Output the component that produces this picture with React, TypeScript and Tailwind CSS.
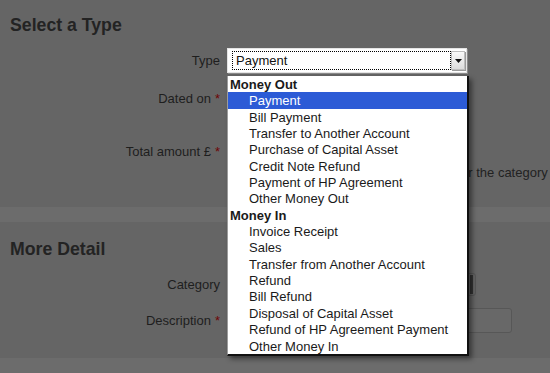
import React from 'react';

const groups = [
  {
    label: 'Money Out',
    items: [
      'Payment',
      'Bill Payment',
      'Transfer to Another Account',
      'Purchase of Capital Asset',
      'Credit Note Refund',
      'Payment of HP Agreement',
      'Other Money Out',
    ],
  },
  {
    label: 'Money In',
    items: [
      'Invoice Receipt',
      'Sales',
      'Transfer from Another Account',
      'Refund',
      'Bill Refund',
      'Disposal of Capital Asset',
      'Refund of HP Agreement Payment',
      'Other Money In',
    ],
  },
];

function Req() {
  return <span className="ml-[4px] text-[#6e0606]">*</span>;
}

function Label({ children, required }: { children: React.ReactNode; required?: boolean }) {
  return (
    <div className="w-[220px] shrink-0 text-right text-[13px] text-[#1e1e1e]">
      {children}
      {required && <Req />}
    </div>
  );
}

function TypeSelect() {
  return (
    <div className="relative">
      <div className="flex h-[25px] w-[240px] items-center border border-[#e4e4e4] bg-white pl-[4px] pr-[1px] shadow-[1px_1px_0_#8a8a8a]">
        <div className="flex h-[19px] flex-1 items-center border border-dotted border-black pl-[3px] text-[13px] text-[#111]">
          Payment
        </div>
        <div className="flex h-[19px] w-[14px] items-center justify-center border border-[#bdbdbd] bg-gradient-to-b from-[#fafafa] to-[#dcdcdc] shadow-[1px_1px_0_#9a9a9a]">
          <svg width="7" height="4" viewBox="0 0 7 4">
            <path d="M0 0h7L3.5 4z" fill="#111" />
          </svg>
        </div>
      </div>

      <div className="absolute left-0 top-[28px] z-20 w-[242px] border-b-[2px] border-l border-r-[2px] border-b-[#111] border-l-[#9c9c9c] border-r-[#111] bg-white shadow-[3px_3px_5px_rgba(0,0,0,0.45)]">
        {groups.map((g) => (
          <div key={g.label}>
            <div className="h-[16.35px] pl-[2px] text-[13px] font-bold leading-[17px] text-[#1a1a1a]">
              {g.label}
            </div>
            {g.items.map((item) => (
              <div
                key={item}
                className={
                  item === 'Payment'
                    ? 'h-[16.35px] bg-[#2c5bd6] pl-[21px] text-[13px] leading-[17px] text-white'
                    : 'h-[16.35px] pl-[21px] text-[13px] leading-[17px] text-[#1a1a1a]'
                }
              >
                {item}
              </div>
            ))}
          </div>
        ))}
      </div>
    </div>
  );
}

export default function App() {
  return (
    <div className="h-[373px] w-[550px] overflow-hidden bg-[#6c6c6c] font-['Liberation_Sans',Arial,sans-serif]">
      <section className="flex h-[207px] flex-col bg-[#656565] pt-[14px]">
        <h2 className="h-[22px] pl-[10px] text-[17.7px] font-bold leading-[22px] text-[#232323]">
          Select a Type
        </h2>
        <div className="mt-[12px] flex h-[25px] items-center gap-[7px]">
          <Label>Type</Label>
          <TypeSelect />
        </div>
        <div className="mt-[14px] flex h-[24px] items-center gap-[7px]">
          <Label required>Dated on</Label>
          <div className="h-[24px] w-[120px] rounded-[3px] border border-[#575757]" />
        </div>
        <div className="mt-[29px] flex h-[24px] items-center gap-[7px]">
          <Label required>Total amount £</Label>
          <div className="h-[24px] w-[120px] rounded-[3px] border border-[#575757]" />
        </div>
        <p className="mt-[1px] h-[16px] whitespace-nowrap pl-[231px] text-[13px] leading-[16px] text-[#222]">
          Enter the gross amount, including VAT, for the category and VAT rate
        </p>
      </section>

      <div className="h-[15px]" />

      <section className="flex h-[136px] flex-col bg-[#656565] pt-[16px]">
        <h2 className="h-[22px] pl-[10px] text-[17.7px] font-bold leading-[22px] text-[#232323]">
          More Detail
        </h2>
        <div className="mt-[13px] flex h-[23px] items-center gap-[9px]">
          <Label>Category</Label>
          <div className="flex h-[23px] w-[247px] items-center justify-end rounded-[3px] border border-[#575757] pr-[2px]">
            <div className="h-[19px] w-[3px] bg-[#333]" />
          </div>
        </div>
        <div className="mt-[12px] flex h-[25px] items-center gap-[9px]">
          <Label required>Description</Label>
          <div className="h-[25px] w-[283px] rounded-[3px] border border-[#575757] bg-[#686868]" />
        </div>
      </section>
    </div>
  );
}
